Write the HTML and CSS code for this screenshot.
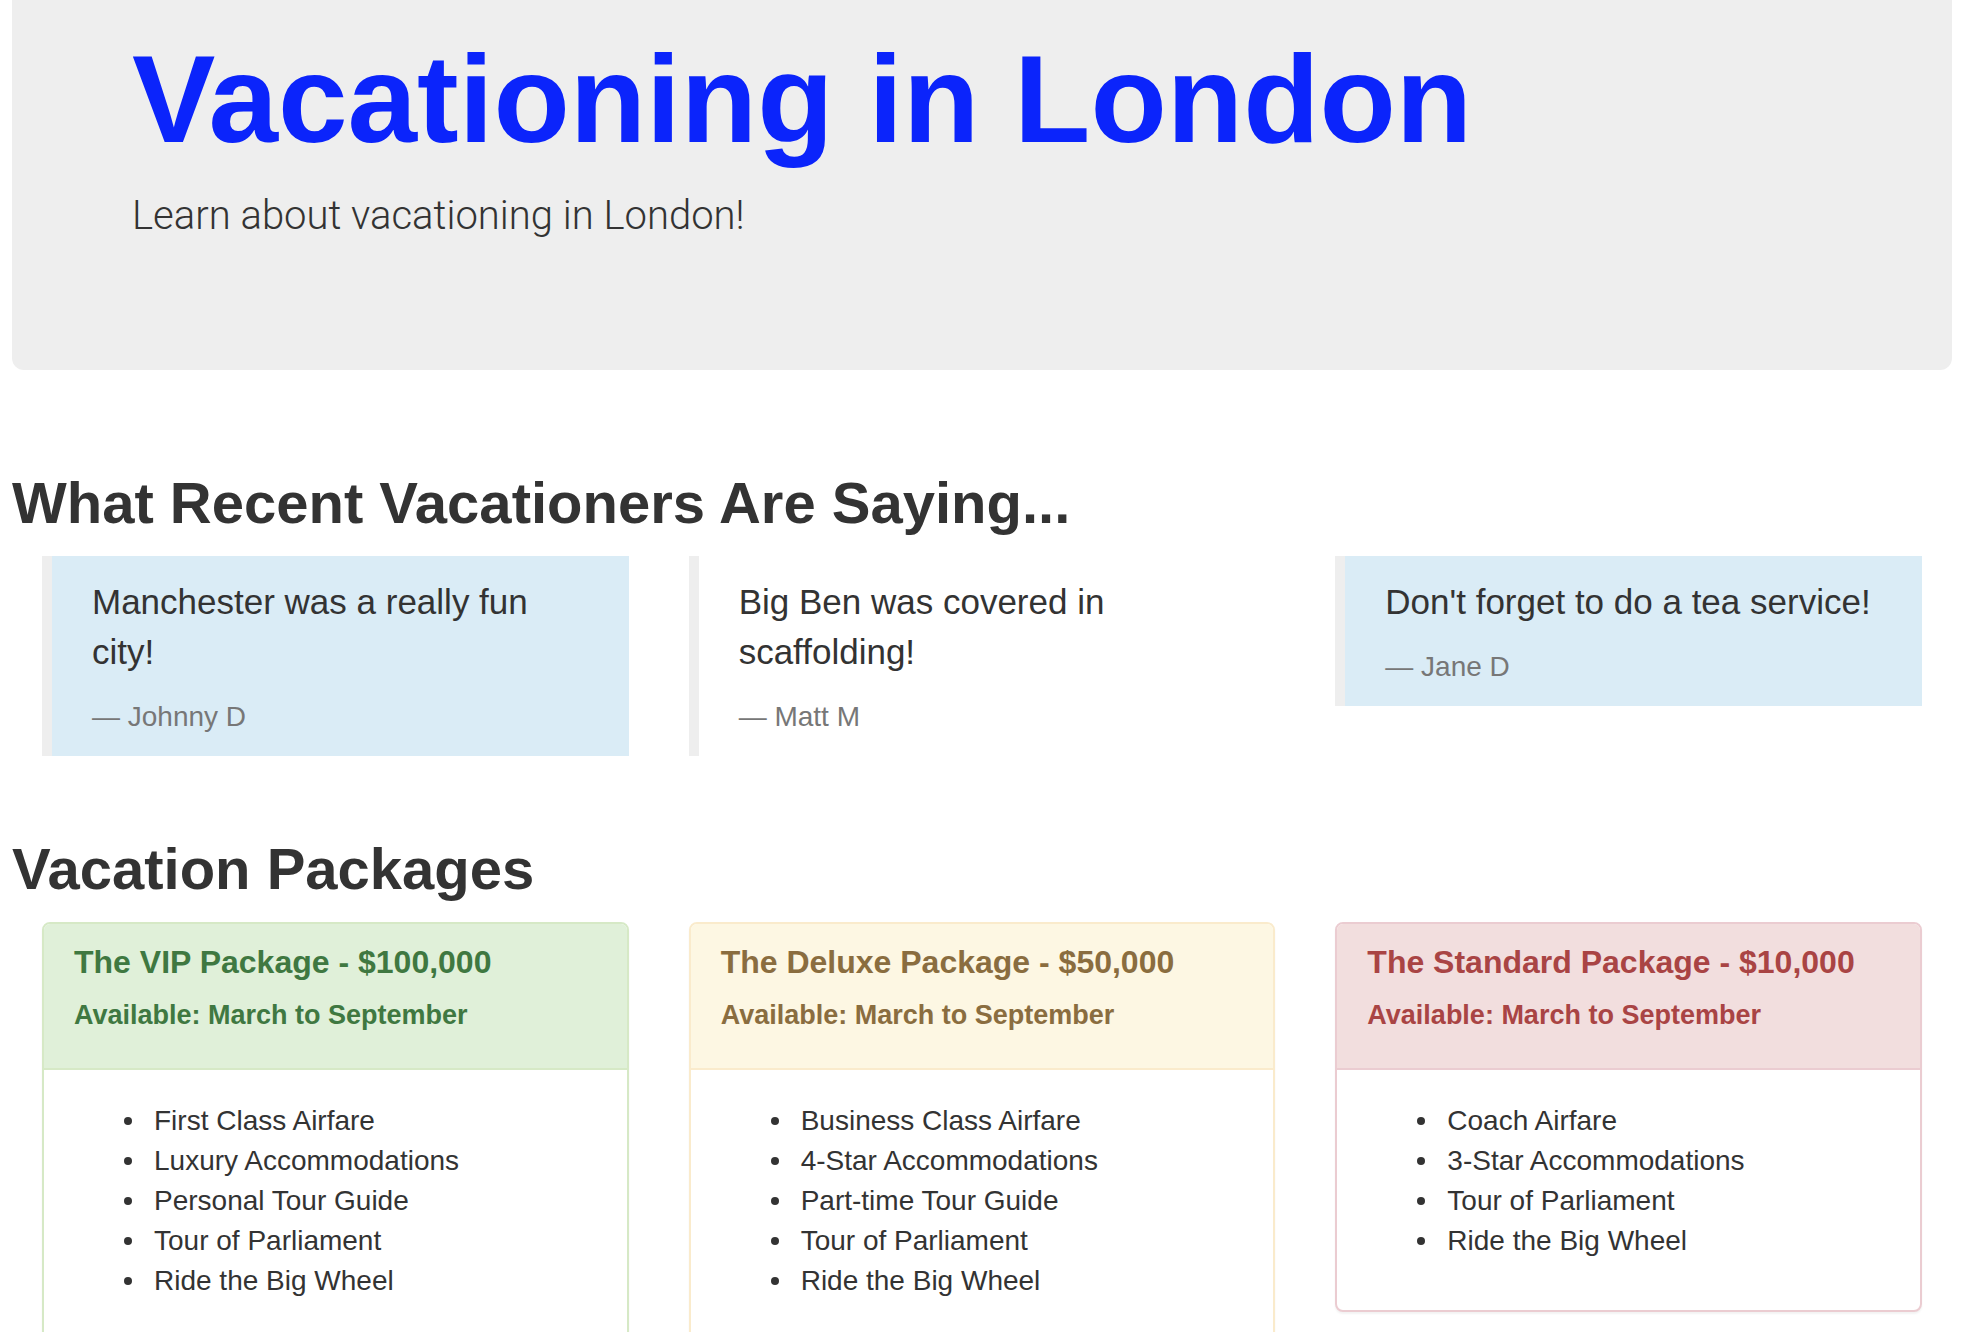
FILE: index.html
```html
<!DOCTYPE html>
<html lang="en">
<head>
<meta charset="utf-8">
<meta name="viewport" content="width=device-width, initial-scale=1">
<title>Vacationing in London</title>
<link rel="stylesheet" href="styles.css">
</head>
<body>
<header class="jumbotron">
  <h1 class="jumbotron-title">Vacationing in London</h1>
  <p class="jumbotron-lead">Learn about vacationing in London!</p>
</header>
<main class="content">
  <section class="section">
    <h2 class="section-title">What Recent Vacationers Are Saying...</h2>
    <div class="row">
      <blockquote class="quote quote-info">
        <p class="quote-text">Manchester was a really fun city!</p>
        <footer class="quote-author">Johnny D</footer>
      </blockquote>
      <blockquote class="quote">
        <p class="quote-text">Big Ben was covered in scaffolding!</p>
        <footer class="quote-author">Matt M</footer>
      </blockquote>
      <blockquote class="quote quote-info">
        <p class="quote-text">Don't forget to do a tea service!</p>
        <footer class="quote-author">Jane D</footer>
      </blockquote>
    </div>
  </section>
  <section class="section">
    <h2 class="section-title">Vacation Packages</h2>
    <div class="row">
      <article class="panel panel-success">
        <header class="panel-heading">
          <h3 class="panel-title">The VIP Package - $100,000</h3>
          <h4 class="panel-dates">Available: March to September</h4>
        </header>
        <ul class="panel-list">
          <li>First Class Airfare</li>
          <li>Luxury Accommodations</li>
          <li>Personal Tour Guide</li>
          <li>Tour of Parliament</li>
          <li>Ride the Big Wheel</li>
        </ul>
      </article>
      <article class="panel panel-warning">
        <header class="panel-heading">
          <h3 class="panel-title">The Deluxe Package - $50,000</h3>
          <h4 class="panel-dates">Available: March to September</h4>
        </header>
        <ul class="panel-list">
          <li>Business Class Airfare</li>
          <li>4-Star Accommodations</li>
          <li>Part-time Tour Guide</li>
          <li>Tour of Parliament</li>
          <li>Ride the Big Wheel</li>
        </ul>
      </article>
      <article class="panel panel-danger">
        <header class="panel-heading">
          <h3 class="panel-title">The Standard Package - $10,000</h3>
          <h4 class="panel-dates">Available: March to September</h4>
        </header>
        <ul class="panel-list">
          <li>Coach Airfare</li>
          <li>3-Star Accommodations</li>
          <li>Tour of Parliament</li>
          <li>Ride the Big Wheel</li>
        </ul>
      </article>
    </div>
  </section>
</main>
</body>
</html>
```
FILE: styles.css
```css
* {
  box-sizing: border-box;
}

body {
  margin: 0;
  padding: 0 12px;
  background: #fff;
  color: #333;
  font-family: "Helvetica Neue", "Liberation Sans", Arial, sans-serif;
  font-size: 28px;
  line-height: 40px;
}

h1,
h2,
h3,
h4,
p,
ul,
blockquote {
  margin: 0;
}

.jumbotron {
  padding: 30px 120px 124px;
  border-radius: 0 0 12px 12px;
  background: #eee;
}

.jumbotron-title {
  margin-bottom: 18px;
  color: #0b24fb;
  font-size: 125px;
  font-weight: 700;
  line-height: 138px;
}

.jumbotron-lead {
  font-family: Roboto, sans-serif;
  font-size: 40px;
  font-weight: 300;
  line-height: 60px;
}

.content {
  display: flex;
  flex-direction: column;
  gap: 80px;
  padding-top: 100px;
}

.section-title {
  margin-bottom: 20px;
  font-size: 58px;
  font-weight: 700;
  line-height: 66px;
}

.row {
  display: grid;
  grid-template-columns: repeat(3, 1fr);
  align-items: start;
  gap: 60px;
  padding: 0 30px;
}

.quote {
  padding: 21px 40px 19px;
  border-left: 10px solid #eee;
}

.quote-info {
  background: #daecf6;
}

.quote-text {
  margin-bottom: 20px;
  font-size: 35px;
  line-height: 50px;
}

.quote-author {
  color: #777;
}

.quote-author::before {
  content: "\2014 \00A0";
}

.panel {
  border: 2px solid;
  border-radius: 8px;
  background: #fff;
  box-shadow: 0 2px 2px rgba(0, 0, 0, 0.05);
}

.panel-heading {
  padding: 20px 30px 38px;
  border-bottom: 2px solid;
  border-color: inherit;
  border-radius: 6px 6px 0 0;
}

.panel-title {
  margin-bottom: 20px;
  font-size: 32px;
  line-height: 36px;
}

.panel-dates {
  font-size: 27px;
  line-height: 30px;
}

.panel-list {
  padding: 31px 30px 49px 80px;
  list-style: none;
}

.panel-list li {
  display: flex;
  align-items: center;
  gap: 22px;
}

.panel-list li::before {
  content: "";
  flex: none;
  width: 8px;
  height: 8px;
  border-radius: 50%;
  background: #333;
}

.panel-success {
  border-color: #d6e9c6;
}

.panel-success .panel-heading {
  background: #e0f0d9;
  color: #3f7841;
}

.panel-warning {
  border-color: #faebcc;
}

.panel-warning .panel-heading {
  background: #fdf7e3;
  color: #8a6d3f;
}

.panel-danger {
  border-color: #ebccd1;
}

.panel-danger .panel-heading {
  background: #f2dede;
  color: #a94444;
}
```
